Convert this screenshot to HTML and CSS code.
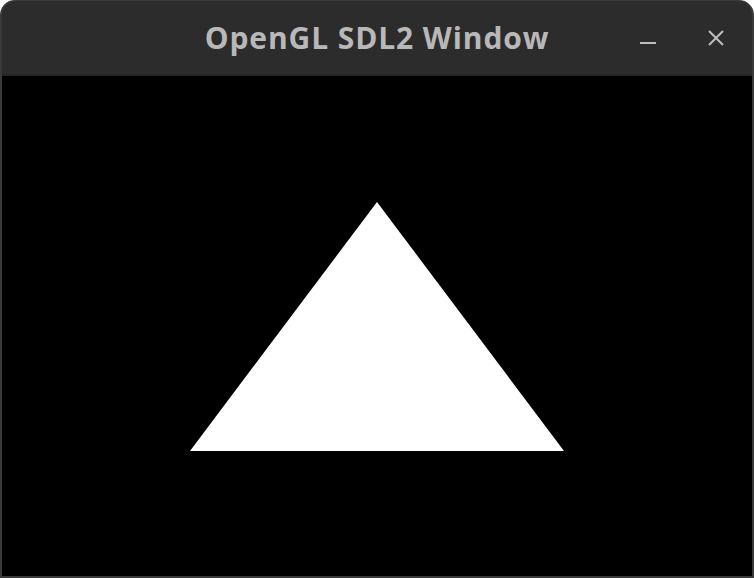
FILE: index.html
```html
<!DOCTYPE html>
<html>
<head>
<meta charset="utf-8">
<link rel="stylesheet" href="styles.css">
</head>
<body>
<div class="window">
  <div class="titlebar">
    <div class="title">OpenGL SDL2 Window</div>
    <div class="controls">
      <svg class="btn" width="16" height="16" viewBox="0 0 16 16"><rect x="0" y="12" width="16" height="2" fill="#bdbdbd"/></svg>
      <svg class="btn" width="16" height="16" viewBox="0 0 16 16"><path d="M1 1 L15 15 M15 1 L1 15" stroke="#bdbdbd" stroke-width="2"/></svg>
    </div>
  </div>
  <div class="canvas">
    <svg width="750" height="500" viewBox="0 0 750 500" class="scene">
      <polygon points="375,126 188,375 562,375" fill="#fff"/>
    </svg>
  </div>
</div>
</body>
</html>
```
FILE: styles.css
```css
html, body { margin: 0; padding: 0; background: #fff; }
.window {
  width: 754px; height: 578px; box-sizing: border-box;
  background: #3a3a3a; border-radius: 15px 15px 0 0;
  padding: 1px 2px 2px 2px;
  display: flex; flex-direction: column; overflow: hidden;
}
.titlebar {
  height: 73px; flex: none; background: #2c2c2c; border-radius: 14px 14px 0 0;
  border-bottom: 2px solid #242424;
  position: relative;
  display: flex; align-items: center; justify-content: center;
}
.title {
  font-family: "Open Sans", "Noto Sans", sans-serif; font-weight: 700;
  font-size: 30px; color: #b8b8b8; letter-spacing: 0.9px;
  margin-top: 0px;
}
.controls {
  position: absolute; right: 28px; top: 29px;
  display: flex; gap: 52px;
}
.btn { display: block; }
.canvas { flex: 1; background: #000; }
.scene { display: block; }
```
